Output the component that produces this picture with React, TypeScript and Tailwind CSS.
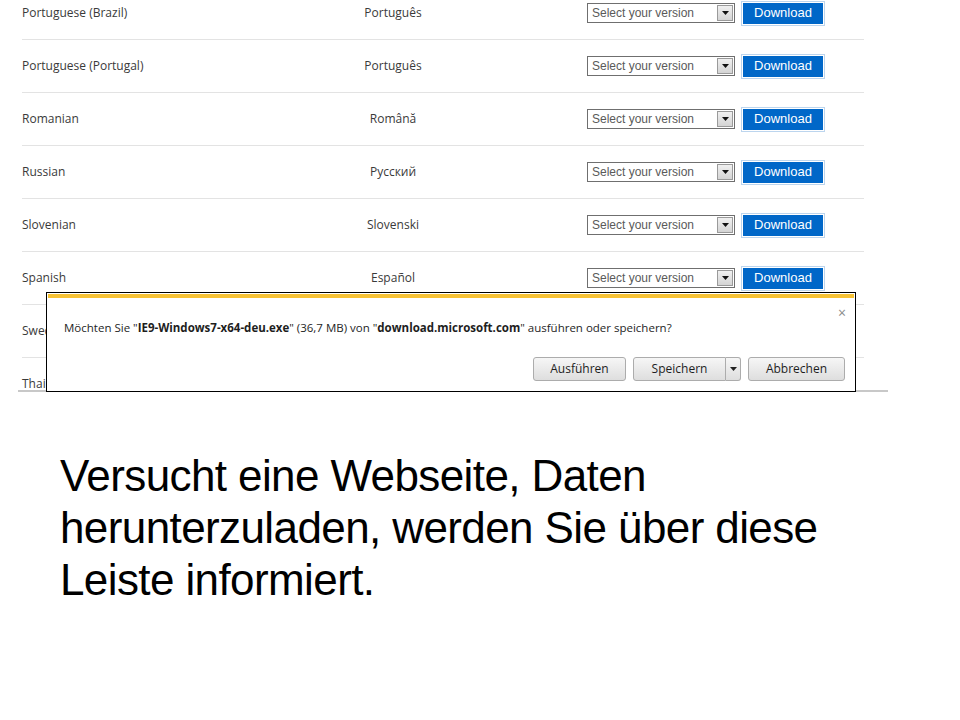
import React from 'react'

type Lang = { name: string; native: string }

const LANGS: Lang[] = [
  { name: 'Portuguese (Brazil)', native: 'Português' },
  { name: 'Portuguese (Portugal)', native: 'Português' },
  { name: 'Romanian', native: 'Română' },
  { name: 'Russian', native: 'Русский' },
  { name: 'Slovenian', native: 'Slovenski' },
  { name: 'Spanish', native: 'Español' },
  { name: 'Swedish', native: 'Svenska' },
  { name: 'Thai', native: 'ไทย' },
]

const segoe = { fontFamily: '"Open Sans", "Noto Sans", sans-serif' }
const arial = { fontFamily: '"Liberation Sans", Arial, sans-serif' }

function VersionSelect() {
  return (
    <div className="ml-[93px] flex h-[20px] w-[148px] items-center border border-[#6f6f6f] bg-white pl-[4px] pr-px">
      <span className="flex-1 text-[12px] leading-none text-[#5a5a5a]" style={arial}>Select your version</span>
      <span className="flex h-[16px] w-[16px] items-center justify-center border border-[#9a9a9a] bg-gradient-to-b from-[#f0f0f0] to-[#d4d4d4]">
        <svg width="7" height="4" viewBox="0 0 7 4"><path d="M0 0h7L3.5 4z" fill="#111" /></svg>
      </span>
    </div>
  )
}

function DownloadButton() {
  return (
    <div className="ml-[6px] h-[25px] w-[84px] border border-[#bcd5ee] bg-white p-px">
      <div className="flex h-full w-full items-center justify-center bg-[#0067c8] text-[13px] text-white" style={arial}>
        Download
      </div>
    </div>
  )
}

function GrayButton({ children, className = '' }: { children: React.ReactNode; className?: string }) {
  return (
    <div className={`flex h-[24px] items-center justify-center rounded-[3px] border border-[#acacac] bg-gradient-to-b from-[#f6f6f6] to-[#dedede] text-[12px] text-[#1e1e1e] ${className}`}>
      {children}
    </div>
  )
}

export default function App() {
  return (
    <div className="min-h-screen bg-white">
      <div className="relative">
        <div className="h-[390px] overflow-hidden">
          <div className="mt-[-13px] ml-[22px] w-[842px]">
            {LANGS.map(l => (
              <div key={l.name} className="flex h-[53px] items-center border-b border-[#e3e3e3]">
                <span className="w-[270px] text-[12px] text-[#3a3a3a]" style={segoe}>{l.name}</span>
                <span className="w-[202px] text-center text-[12px] text-[#3a3a3a]" style={segoe}>{l.native}</span>
                <VersionSelect />
                <DownloadButton />
              </div>
            ))}
          </div>
        </div>
        <div className="ml-[18px] h-[2px] w-[870px] bg-[#c8c8c8]" />

        {/* IE9 download notification bar */}
        <div className="absolute left-[46px] top-[292px] h-[100px] w-[810px] border border-black bg-white p-px">
          <div className="h-[4px] bg-[#f7c234]" />
          <div className="relative" style={segoe}>
            <span className="absolute right-[8px] top-[8px] text-[14px] leading-none text-[#8a8a8a]">×</span>
            <p className="pl-[16px] pt-[22px] text-[11.5px] leading-[16px] text-[#1e1e1e]">
              Möchten Sie "<b>IE9-Windows7-x64-deu.exe</b>" (36,7 MB) von "<b>download.microsoft.com</b>" ausführen oder speichern?
            </p>
            <div className="mt-[21px] flex justify-end gap-[7px] pr-[9px]">
              <GrayButton className="w-[93px]">Ausführen</GrayButton>
              <div className="flex">
                <GrayButton className="w-[93px] rounded-r-none">Speichern</GrayButton>
                <GrayButton className="w-[15px] rounded-l-none border-l-0">
                  <svg width="7" height="4" viewBox="0 0 7 4"><path d="M0 0h7L3.5 4z" fill="#222" /></svg>
                </GrayButton>
              </div>
              <GrayButton className="w-[97px]">Abbrechen</GrayButton>
            </div>
          </div>
        </div>
      </div>

      <p className="mt-[58px] ml-[60px] w-[800px] text-[44px] leading-[52px] tracking-[-0.6px] text-black" style={arial}>
        Versucht eine Webseite, Daten herunterzuladen, werden Sie über diese Leiste informiert.
      </p>
    </div>
  )
}
